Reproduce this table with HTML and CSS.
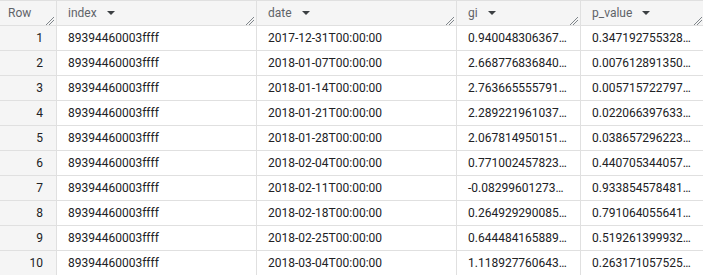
FILE: index.html
```html
<!DOCTYPE html>
<html lang="en">
<head>
    <meta charset="UTF-8">
    <title>Query results</title>
    <link rel="stylesheet" href="styles.css">
</head>
<body>
    <div class="results">
        <div class="results-row header">
            <div class="cell row-num">Row<span class="resize"></span></div>
            <div class="cell">index <span class="sort"></span><span class="resize"></span></div>
            <div class="cell">date <span class="sort"></span><span class="resize"></span></div>
            <div class="cell">gi <span class="sort"></span><span class="resize"></span></div>
            <div class="cell">p_value <span class="sort"></span><span class="resize"></span></div>
        </div>

        <div class="results-row">
            <div class="cell row-num">1</div>
            <div class="cell">89394460003ffff</div>
            <div class="cell">2017-12-31T00:00:00</div>
            <div class="cell">0.940048306367…</div>
            <div class="cell">0.347192755328…</div>
        </div>
        <div class="results-row">
            <div class="cell row-num">2</div>
            <div class="cell">89394460003ffff</div>
            <div class="cell">2018-01-07T00:00:00</div>
            <div class="cell">2.668776836840…</div>
            <div class="cell">0.007612891350…</div>
        </div>
        <div class="results-row">
            <div class="cell row-num">3</div>
            <div class="cell">89394460003ffff</div>
            <div class="cell">2018-01-14T00:00:00</div>
            <div class="cell">2.763665555791…</div>
            <div class="cell">0.005715722797…</div>
        </div>
        <div class="results-row">
            <div class="cell row-num">4</div>
            <div class="cell">89394460003ffff</div>
            <div class="cell">2018-01-21T00:00:00</div>
            <div class="cell">2.289221961037…</div>
            <div class="cell">0.022066397633…</div>
        </div>
        <div class="results-row">
            <div class="cell row-num">5</div>
            <div class="cell">89394460003ffff</div>
            <div class="cell">2018-01-28T00:00:00</div>
            <div class="cell">2.067814950151…</div>
            <div class="cell">0.038657296223…</div>
        </div>
        <div class="results-row">
            <div class="cell row-num">6</div>
            <div class="cell">89394460003ffff</div>
            <div class="cell">2018-02-04T00:00:00</div>
            <div class="cell">0.771002457823…</div>
            <div class="cell">0.440705344057…</div>
        </div>
        <div class="results-row">
            <div class="cell row-num">7</div>
            <div class="cell">89394460003ffff</div>
            <div class="cell">2018-02-11T00:00:00</div>
            <div class="cell">-0.08299601273…</div>
            <div class="cell">0.933854578481…</div>
        </div>
        <div class="results-row">
            <div class="cell row-num">8</div>
            <div class="cell">89394460003ffff</div>
            <div class="cell">2018-02-18T00:00:00</div>
            <div class="cell">0.264929290085…</div>
            <div class="cell">0.791064055641…</div>
        </div>
        <div class="results-row">
            <div class="cell row-num">9</div>
            <div class="cell">89394460003ffff</div>
            <div class="cell">2018-02-25T00:00:00</div>
            <div class="cell">0.644484165889…</div>
            <div class="cell">0.519261399932…</div>
        </div>
        <div class="results-row">
            <div class="cell row-num">10</div>
            <div class="cell">89394460003ffff</div>
            <div class="cell">2018-03-04T00:00:00</div>
            <div class="cell">1.118927760643…</div>
            <div class="cell">0.263171057525…</div>
        </div>
    </div>
</body>
</html>
```

FILE: styles.css
```css
* {
    margin: 0;
    padding: 0;
    box-sizing: border-box;
}

body {
    font-family: Roboto, "Liberation Sans", sans-serif;
    font-size: 12px;
    color: #202124;
    background: #fff;
    overflow: hidden;
}

.results {
    width: 705px;
    border-top: 1px solid #e0e0e0;
}

.results-row {
    display: grid;
    grid-template-columns: 57px 200px 200px 124px 124px;
    height: 25px;
}

.results-row.header {
    height: 25px;
    background: #f5f5f5;
    color: #5f6368;
}

.cell {
    position: relative;
    display: flex;
    align-items: center;
    padding: 0 4px 0 11px;
    border-right: 1px solid #e0e0e0;
    border-bottom: 1px solid #e0e0e0;
    white-space: nowrap;
    overflow: hidden;
}

.row-num {
    justify-content: flex-end;
    padding: 0 13px 0 8px;
    background: #f5f5f5;
}

.header .row-num {
    justify-content: flex-start;
}

/* little sort caret next to the column name */
.sort {
    display: inline-block;
    margin-left: 10px;
    width: 0;
    height: 0;
    border-left: 4px solid transparent;
    border-right: 4px solid transparent;
    border-top: 4px solid #3c4043;
}

/* column resize grip, bottom right corner of header cells */
.resize {
    position: absolute;
    right: 2px;
    bottom: 0;
    width: 8px;
    height: 8px;
    background:
        linear-gradient(135deg, transparent 45%, #80868b 45%, #80868b 55%, transparent 55%) 0 0 / 8px 8px no-repeat,
        linear-gradient(135deg, transparent 45%, #80868b 45%, #80868b 55%, transparent 55%) 3px 3px / 5px 5px no-repeat;
}
```
